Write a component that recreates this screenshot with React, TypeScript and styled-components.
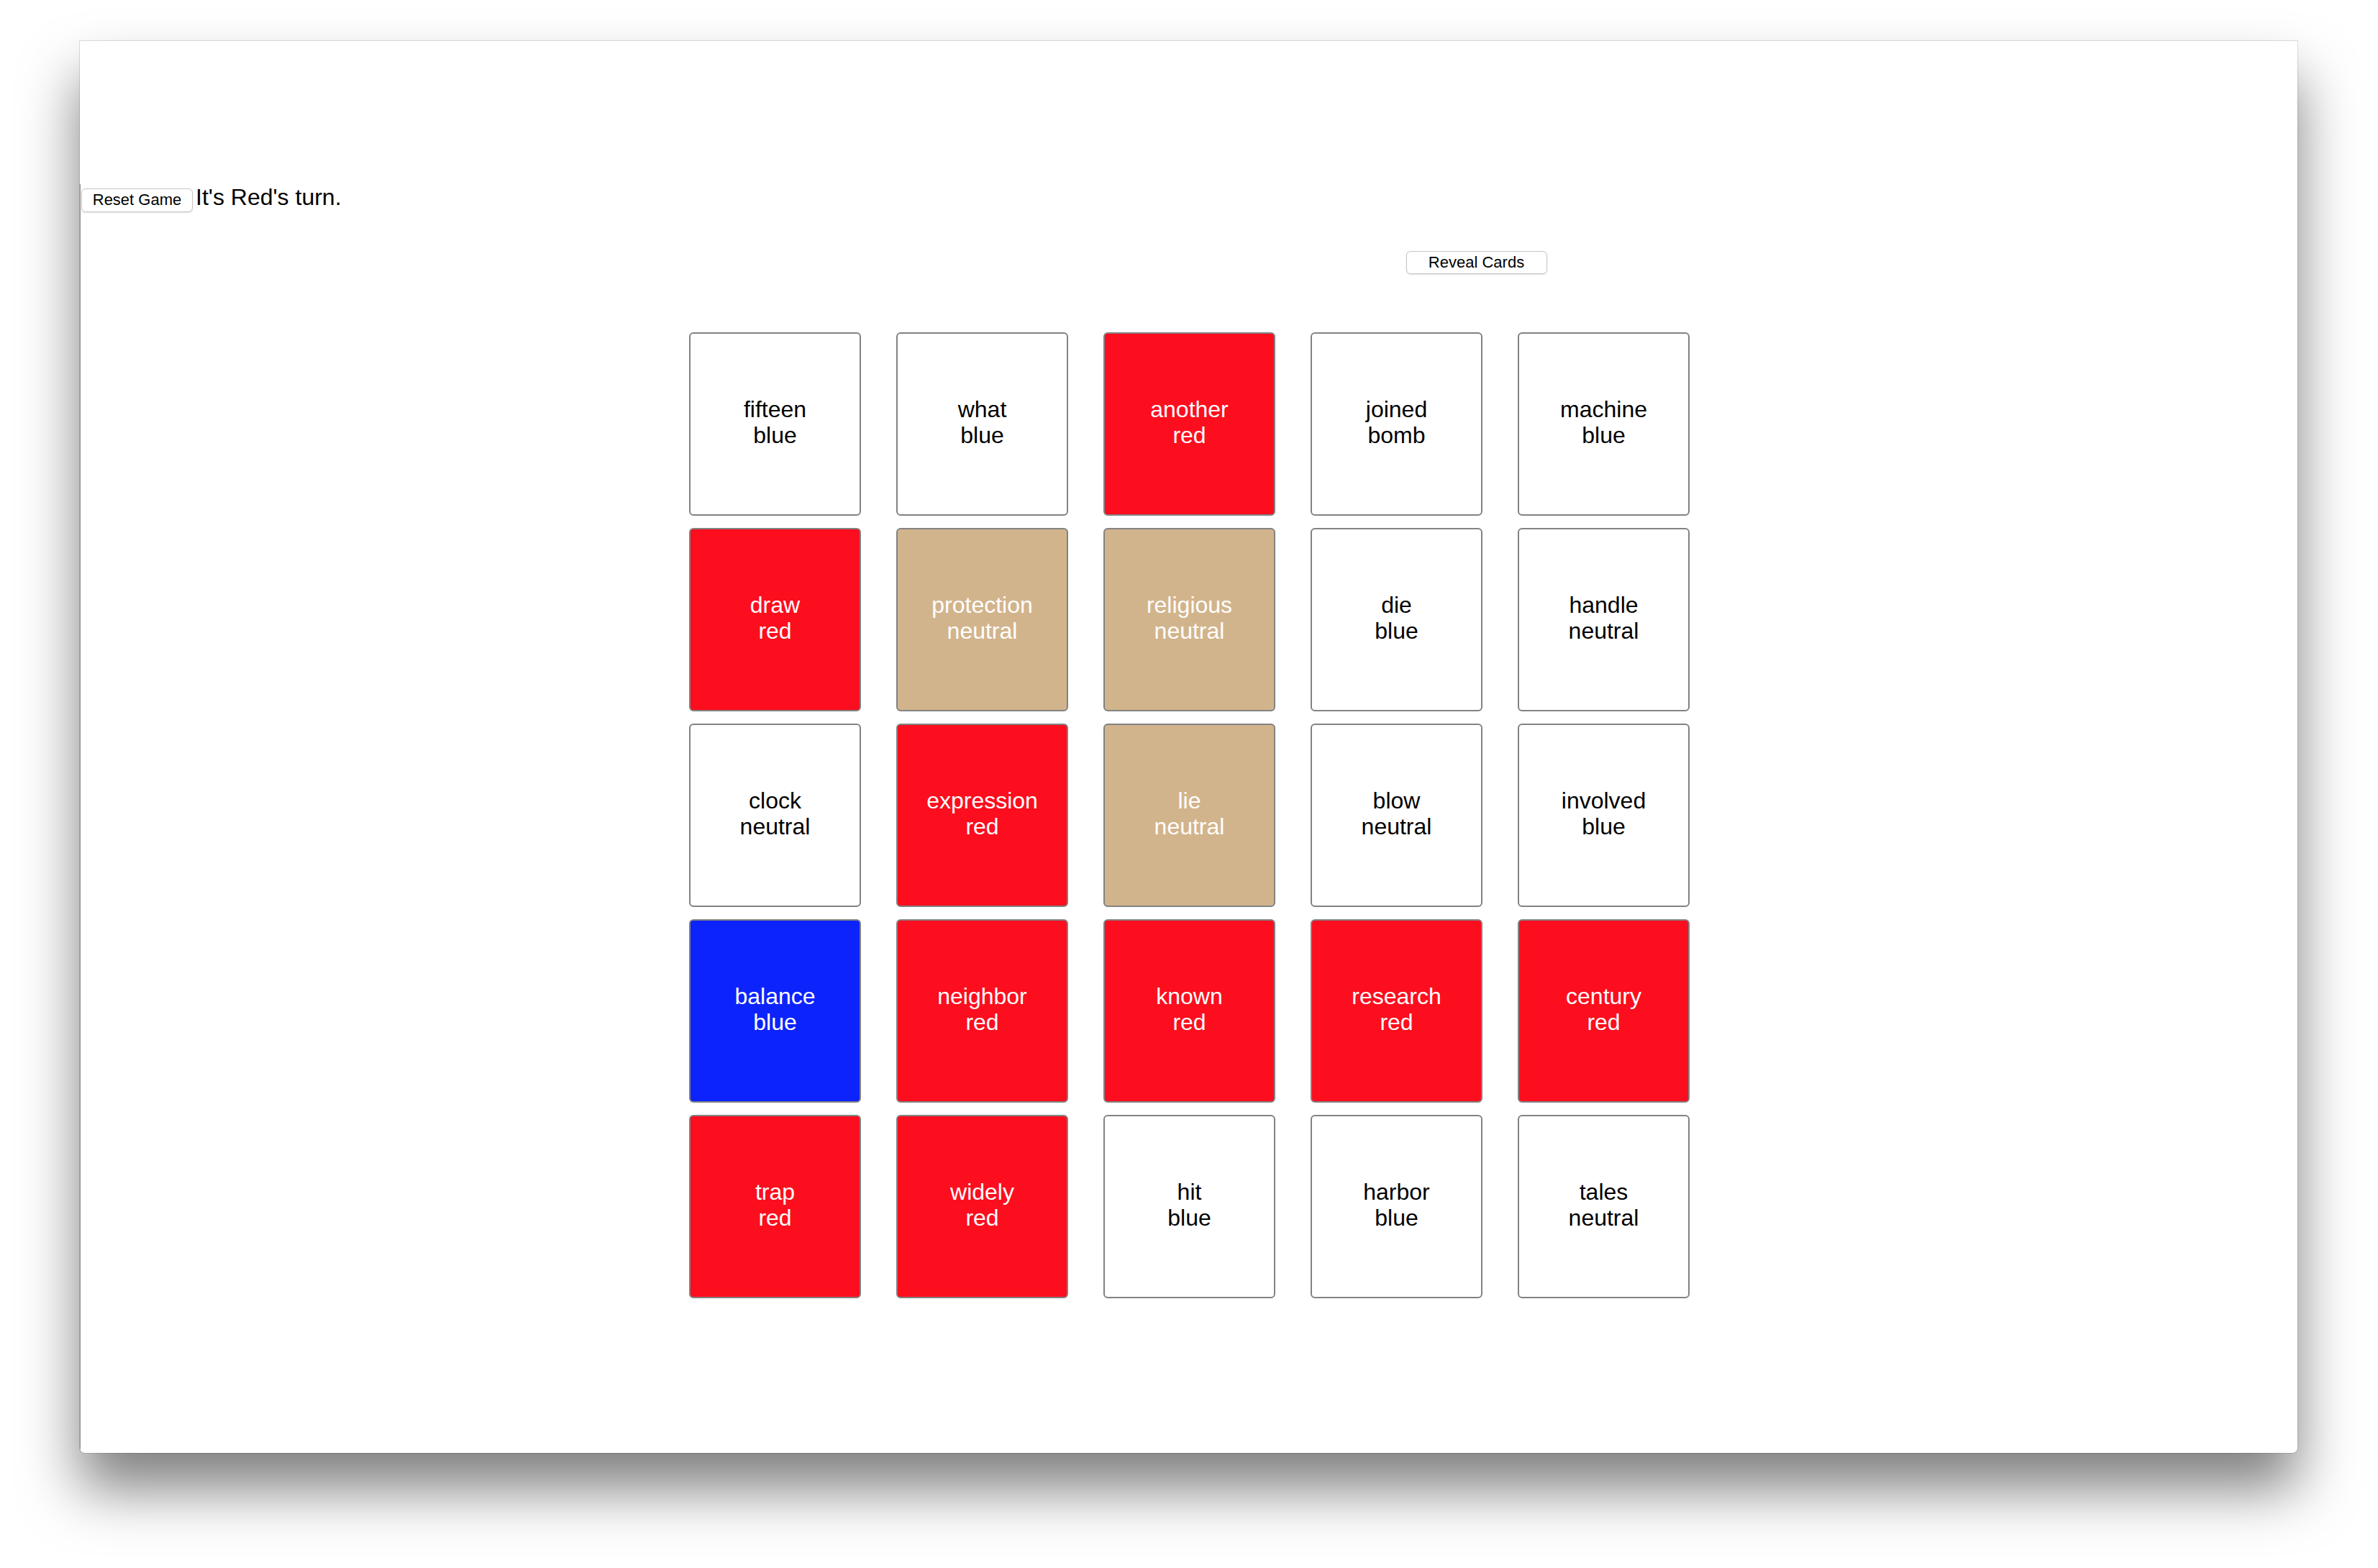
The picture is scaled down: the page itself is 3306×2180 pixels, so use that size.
import { FC } from "react";
import styled, { createGlobalStyle } from "styled-components";

type Kind = "red" | "blue" | "neutral" | "bomb";

interface ICard {
  word: string;
  kind: Kind;
  revealed: boolean;
}

const cards: ICard[] = [
  { word: "fifteen", kind: "blue", revealed: false },
  { word: "what", kind: "blue", revealed: false },
  { word: "another", kind: "red", revealed: true },
  { word: "joined", kind: "bomb", revealed: false },
  { word: "machine", kind: "blue", revealed: false },
  { word: "draw", kind: "red", revealed: true },
  { word: "protection", kind: "neutral", revealed: true },
  { word: "religious", kind: "neutral", revealed: true },
  { word: "die", kind: "blue", revealed: false },
  { word: "handle", kind: "neutral", revealed: false },
  { word: "clock", kind: "neutral", revealed: false },
  { word: "expression", kind: "red", revealed: true },
  { word: "lie", kind: "neutral", revealed: true },
  { word: "blow", kind: "neutral", revealed: false },
  { word: "involved", kind: "blue", revealed: false },
  { word: "balance", kind: "blue", revealed: true },
  { word: "neighbor", kind: "red", revealed: true },
  { word: "known", kind: "red", revealed: true },
  { word: "research", kind: "red", revealed: true },
  { word: "century", kind: "red", revealed: true },
  { word: "trap", kind: "red", revealed: true },
  { word: "widely", kind: "red", revealed: true },
  { word: "hit", kind: "blue", revealed: false },
  { word: "harbor", kind: "blue", revealed: false },
  { word: "tales", kind: "neutral", revealed: false },
];

const fills: Record<Kind, string> = {
  red: "#fc0e1e",
  blue: "#0c24fb",
  neutral: "#d2b48c",
  bomb: "#222222",
};

const App: FC = () => {
  return (
    <Screen>
      <GlobalStyle />
      <Window>
        <Chrome />
        <Page>
          <TopBar>
            <Button $width={155} $height={33}>
              Reset Game
            </Button>
            <Turn>It's Red's turn.</Turn>
          </TopBar>
          <RevealRow>
            <Button $width={196} $height={32}>
              Reveal Cards
            </Button>
          </RevealRow>
          <Board>
            {cards.map((card, idx) => (
              <Card
                key={idx}
                $fill={card.revealed ? fills[card.kind] : "#ffffff"}
                $ink={card.revealed ? "#ffffff" : "#000000"}
              >
                <div>{card.word}</div>
                <div>{card.kind}</div>
              </Card>
            ))}
          </Board>
        </Page>
      </Window>
    </Screen>
  );
};

export default App;

const GlobalStyle = createGlobalStyle`
  html, body {
    margin: 0;
    padding: 0;
    background: #ffffff;
  }
  body {
    font-family: "Liberation Sans", Arial, Helvetica, sans-serif;
  }
`;

const Screen = styled.div`
  width: 3306px;
  height: 2180px;
  box-sizing: border-box;
  padding: 57px 0 0 111px;
  overflow: hidden;
  background: #ffffff;
`;

const Window = styled.div`
  width: 3083px;
  height: 1963px;
  display: flex;
  flex-direction: column;
  background: #ffffff;
  border-radius: 0 0 7px 7px;
  box-shadow: 0 50px 80px rgba(0, 0, 0, 0.5), 0 0 0 1px rgba(0, 0, 0, 0.12);
  overflow: hidden;
`;

const Chrome = styled.div`
  height: 199px;
  flex-shrink: 0;
`;

const Page = styled.div`
  flex: 1;
  padding-left: 1px;
  border-left: 1px solid #8e8e8e;
  display: flex;
  flex-direction: column;
`;

const TopBar = styled.div`
  display: flex;
  align-items: baseline;
`;

const Button = styled.button<{ $width: number; $height: number }>`
  width: ${(p) => p.$width}px;
  height: ${(p) => p.$height}px;
  margin: 0;
  padding: 0;
  background: #ffffff;
  border: 1px solid #c6c6c6;
  border-radius: 6px;
  box-shadow: 0 1px 2px rgba(0, 0, 0, 0.12);
  font-family: "Liberation Sans", Arial, Helvetica, sans-serif;
  font-size: 22px;
  color: #000000;
`;

const Turn = styled.span`
  margin-left: 4px;
  font-size: 32px;
  line-height: 37px;
  color: #000000;
`;

const RevealRow = styled.div`
  width: 998px;
  margin: 54px auto 0;
  display: flex;
  justify-content: flex-end;
  padding-right: 4px;
`;

const Board = styled.div`
  margin-top: 81px;
  display: grid;
  grid-template-columns: repeat(5, 239px);
  grid-auto-rows: 255px;
  gap: 17px 49px;
  justify-content: center;
`;

const Card = styled.div<{ $fill: string; $ink: string }>`
  box-sizing: border-box;
  display: flex;
  flex-direction: column;
  justify-content: center;
  align-items: center;
  padding-bottom: 4px;
  background: ${(p) => p.$fill};
  color: ${(p) => p.$ink};
  border: 2px solid #828282;
  border-radius: 6px;
  font-size: 32px;
  line-height: 36.5px;
  text-align: center;
`;
